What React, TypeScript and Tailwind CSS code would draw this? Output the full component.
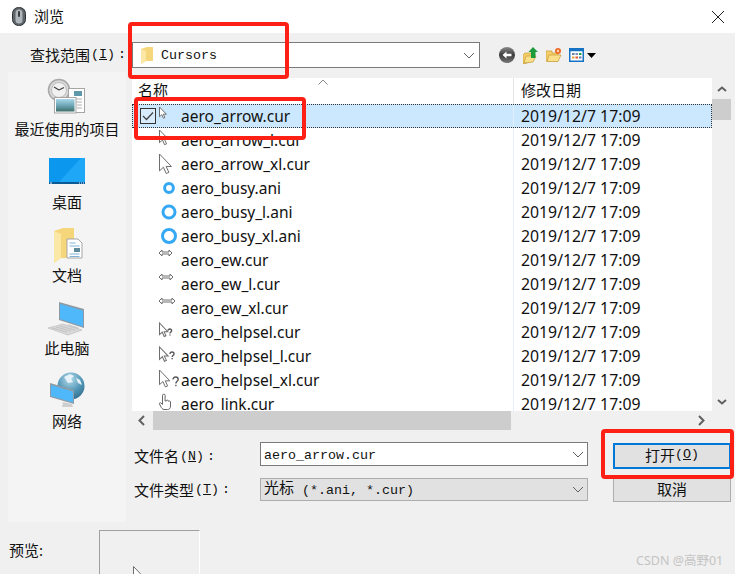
const MONO = "font-['Liberation_Mono','Noto_Sans_CJK_SC',monospace]";
const names = [
  "aero_arrow.cur","aero_arrow_l.cur","aero_arrow_xl.cur","aero_busy.ani","aero_busy_l.ani","aero_busy_xl.ani","aero_ew.cur","aero_ew_l.cur","aero_ew_xl.cur","aero_helpsel.cur","aero_helpsel_l.cur","aero_helpsel_xl.cur","aero_link.cur",
];

function Arrow({ x, y, s }: { x: number; y: number; s: number }) {
  return (
    <path
      transform={`translate(${x} ${y}) scale(${s})`}
      d="M0 0V13L3 10.2L5.2 15L7.2 14.1L5.1 9.6H9.2Z"
      fill="#fff"
      stroke="#6e6e6e"
      strokeWidth={1 / s}
    />
  );
}

function Ring({ r }: { r: number }) {
  return <circle cx="11" cy="12" r={r} fill="#fff" stroke="#35a8f3" strokeWidth="3" />;
}

function Ew({ y, w }: { y: number; w: number }) {
  const e = 1 + w;
  return (
    <path
      d={`M1 ${y}L4 ${y - 3}V${y - 1}H${e - 3}V${y - 3}L${e} ${y}L${e - 3} ${y + 3}V${y + 1}H4V${y + 3}Z`}
      fill="#fff"
      stroke="#6e6e6e"
      strokeWidth="1"
    />
  );
}

function Help({ s, y, qx, qy, q }: { s: number; y: number; qx: number; qy: number; q: number }) {
  return (
    <>
      <Arrow x={1.5} y={y} s={s} />
      <path
        transform={`translate(${qx} ${qy}) scale(${q})`}
        d="M0 2A2 2 0 0 1 4 2C4 3.2 2.2 3.5 2.2 5M2.2 6V7.2"
        fill="none"
        stroke="#5a5a5a"
        strokeWidth={1.4 / q}
      />
    </>
  );
}

function RowIcon({ i }: { i: number }) {
  return (
    <svg width="23" height="24" viewBox="0 0 23 24" className="shrink-0 overflow-visible">
      {i === 0 && <Arrow x={1.5} y={3} s={0.75} />}
      {i === 1 && <Arrow x={1.5} y={2} s={0.98} />}
      {i === 2 && <Arrow x={1.5} y={2} s={1.3} />}
      {i === 3 && <Ring r={4.4} />}
      {i === 4 && <Ring r={6} />}
      {i === 5 && <Ring r={6.5} />}
      {i === 6 && <Ew y={5} w={13} />}
      {i === 7 && <Ew y={5} w={14} />}
      {i === 8 && <Ew y={5} w={16} />}
      {i === 9 && <Help s={0.9} y={3} qx={10} qy={9} q={0.9} />}
      {i === 10 && <Help s={0.95} y={3} qx={12} qy={8} q={1} />}
      {i === 11 && <Help s={1.13} y={2} qx={15} qy={9} q={1.3} />}
      {i === 12 && (
        <path d="M4.5 3.5a1.3 1.3 0 0 1 2.6 0V9h1.2a1 1 0 0 1 2 .3h.5a1 1 0 0 1 1.7 .7V14c0 2-1 3.5-3 3.5H6C4.5 17.5 3.5 16 2.5 14L1.5 12c-.5-1 .8-1.8 1.5-1l1.5 1.5Z" fill="#fff" stroke="#666" strokeWidth="1" />
      )}
    </svg>
  );
}

function Chevron() {
  return (
    <svg width="12" height="7" viewBox="0 0 12 7" className="shrink-0">
      <path d="M1 1L6 6L11 1" fill="none" stroke="#606060" strokeWidth="1" />
    </svg>
  );
}

function Label({ zh, k }: { zh: string; k: string }) {
  return (
    <span className="text-[15px] text-[#111] flex items-center">
      {zh}
      <span className={`${MONO} text-[13.33px] ml-[1px]`}>
        (<u>{k}</u>)<span className="ml-[3px]">:</span>
      </span>
    </span>
  );
}

function Recent() {
  return (
    <svg width="48" height="48" viewBox="0 0 48 48" className="overflow-visible">
      <defs>
        <linearGradient id="sky" x1="0" y1="0" x2="0" y2="1">
          <stop offset="0" stopColor="#a9d8ea" />
          <stop offset="0.5" stopColor="#6fa8b8" />
          <stop offset="1" stopColor="#3e6f6c" />
        </linearGradient>
      </defs>
      <circle cx="16" cy="18" r="10.5" fill="#d8d8d8" stroke="#a8a8a8" strokeWidth="1.5" />
      <circle cx="16" cy="18" r="7.5" fill="#f1f1f1" stroke="#bdbdbd" />
      <path d="M16 18L11 15M16 18L21 15.5" stroke="#444" strokeWidth="1.2" />
      <rect x="25.5" y="16.5" width="16" height="24" fill="#fff" stroke="#a5a5a5" />
      <rect x="31" y="19" width="8" height="5" fill="#5f98a8" />
      <path d="M28 27h11M28 30h11M34 33h5M34 36h5" stroke="#b0b0b0" />
      <rect x="11.5" y="25.5" width="21.5" height="15.5" fill="#fff" stroke="#a5a5a5" />
      <rect x="13" y="27" width="18.5" height="12.5" fill="url(#sky)" />
    </svg>
  );
}

function Desktop() {
  return (
    <svg width="48" height="48" viewBox="0 0 48 48">
      <rect x="6" y="13" width="36" height="26" fill="#0c97ef" />
      <path d="M16 37L38 13H42V37Z" fill="#1ea6f7" />
      <rect x="6" y="37" width="36" height="2" fill="#0b5a94" />
      <path d="M7 38h2M36 38h1M38 38h1M40 38h1" stroke="#e8f6ff" />
    </svg>
  );
}

function Docs() {
  return (
    <svg width="48" height="48" viewBox="0 0 48 48" className="overflow-visible">
      <path d="M11 13L20 10H31V40H18L11 45Z" fill="#f6d67a" />
      <path d="M11 13L18 16V40L11 45Z" fill="#fbe7a6" />
      <path d="M24 21H35L39 25V40H24Z" fill="#fff" stroke="#a5a5a5" />
      <path d="M26.5 25h6M26.5 28h10M26.5 36h10M26.5 38.5h10" stroke="#7fb4d8" />
      <rect x="31" y="30" width="6" height="4" fill="#5f8a9b" />
    </svg>
  );
}

function Computer() {
  return (
    <svg width="48" height="48" viewBox="0 0 48 48" className="overflow-visible">
      <path d="M24 33L35 36L36 39L30 38Z" fill="#cfcfcf" />
      <path d="M16 11L41 18V37L16 29Z" fill="#8f9aa3" />
      <path d="M17 13L40 19.5V35.5L17 28Z" fill="#4fb8fb" />
      <path d="M5 37L20 33L39 39L25 44Z" fill="#d9d9d9" stroke="#b9b9b9" strokeWidth="0.6" />
      <path d="M9 37l15 4M13 36l15 4M17 35l15 4" stroke="#b3b3b3" strokeWidth="0.6" />
    </svg>
  );
}

function Network() {
  return (
    <svg width="48" height="48" viewBox="0 0 48 48" className="overflow-visible">
      <defs>
        <radialGradient id="globe" cx="0.45" cy="0.25" r="0.85">
          <stop offset="0" stopColor="#b5dceb" />
          <stop offset="0.55" stopColor="#5095b5" />
          <stop offset="1" stopColor="#2b6285" />
        </radialGradient>
      </defs>
      <circle cx="28" cy="22" r="13.5" fill="url(#globe)" />
      <path d="M21 13l6-3 4 2-3 3 2 3-5 1-2-3ZM33 14l4 2 2 5-4-2Z" fill="#e6f2f7" />
      <path d="M20 38L29 40L30 43H19Z" fill="#cfcfcf" />
      <path d="M7 19L31 26V40L7 33Z" fill="#8f9aa3" />
      <path d="M8 21L30 27.5V38.5L8 32Z" fill="#4fb8fb" />
    </svg>
  );
}

function Side({ label, children }: { label: string; children: React.ReactNode }) {
  return (
    <div className="h-[73px] flex flex-col items-center">
      <div className="h-[48px] w-[48px] shrink-0">{children}</div>
      <div className="h-[18px] leading-[18px] text-[15px] text-[#111] whitespace-nowrap">{label}</div>
    </div>
  );
}

function Mark({ cls }: { cls: string }) {
  return <div className={`absolute border-[4px] border-[#ff2015] rounded-[4px] pointer-events-none ${cls}`} />;
}

export default function App() {
  return (
    <div className="relative w-[735px] h-[574px] overflow-hidden bg-[#f0f0f0] flex flex-col font-['Noto_Sans','Noto_Sans_CJK_SC',sans-serif] text-[#111]">
      {/* title */}
      <div className="h-[33px] shrink-0 bg-white flex items-center pl-[12px] pr-[10px]">
        <svg width="14" height="19" viewBox="0 0 14 19">
          <rect x="0.5" y="0.5" width="13" height="18" rx="6" fill="#5e6468" stroke="#2f3235" />
          <rect x="3.5" y="2.5" width="7" height="14" rx="3.5" fill="#aeb6bc" />
          <rect x="6" y="4" width="2" height="6" rx="1" fill="#3a3d40" />
        </svg>
        <span className="ml-[8px] text-[15px] leading-none">浏览</span>
        <svg width="14" height="14" viewBox="0 0 14 14" className="ml-auto">
          <path d="M1 1L13 13M13 1L1 13" stroke="#222" strokeWidth="1" />
        </svg>
      </div>

      {/* toolbar */}
      <div className="h-[39px] shrink-0 flex items-start pt-[9px]">
        <div className="w-[132px] h-[26px] pl-[30px] flex items-center shrink-0">
          <Label zh="查找范围" k="I" />
        </div>
        <div className="w-[348px] h-[26px] shrink-0 bg-white border border-[#7a7a7a] flex items-center pl-[8px] pr-[4px]">
          <svg width="13" height="17" viewBox="0 0 13 17">
            <path d="M0 2L6 0H12V14H5L0 17Z" fill="#f6d67a" />
            <path d="M0 2L5 4V14L0 17Z" fill="#fbe7a6" />
          </svg>
          <span className={`${MONO} ml-[7px] pt-[2px] text-[13.33px]`}>Cursors</span>
          <div className="ml-auto"><Chevron /></div>
        </div>
        <div className="ml-[19px] h-[26px] flex items-center">
          <svg width="16" height="16" viewBox="0 0 16 16">
            <defs>
              <linearGradient id="bk" x1="0" y1="0" x2="0" y2="1">
                <stop offset="0" stopColor="#8a8a8a" />
                <stop offset="0.5" stopColor="#3d3d3d" />
                <stop offset="1" stopColor="#777" />
              </linearGradient>
            </defs>
            <circle cx="8" cy="8" r="8" fill="url(#bk)" />
            <path d="M3.5 8L7.5 4.5V6.8H12.5V9.2H7.5V11.5Z" fill="#fff" />
          </svg>
          <svg width="15" height="17" viewBox="0 0 15 17" className="ml-[8px]">
            <path d="M0 8L2 6H9V14L1 17H0Z" fill="#f6cf6a" stroke="#c49a35" strokeWidth="0.7" />
            <path d="M1 16L3 9H13L10 15Z" fill="#fbe08c" stroke="#c49a35" strokeWidth="0.7" />
            <path d="M10 0L15 5H12.5V11H8V5H5.5Z" fill="#1c9a3c" />
          </svg>
          <svg width="16" height="14" viewBox="0 0 16 14" className="ml-[8px]">
            <path d="M0 3H6V5H12V13H0Z" fill="#f6cf6a" stroke="#c49a35" strokeWidth="0.7" />
            <path d="M1 13.5L3 7H15L12 13.5Z" fill="#fbe08c" stroke="#c49a35" strokeWidth="0.7" />
            <circle cx="12" cy="3" r="3" fill="#ee6a2a" />
            <circle cx="12" cy="3" r="1.2" fill="#ffd7a8" />
          </svg>
          <svg width="15" height="14" viewBox="0 0 15 14" className="ml-[7px]">
            <rect x="0.75" y="0.75" width="13.5" height="12.5" fill="#fff" stroke="#1673c4" strokeWidth="1.5" />
            <rect x="0.75" y="0.75" width="13.5" height="2.5" fill="#1673c4" />
            <rect x="3" y="5" width="2.5" height="2" fill="#6a7fa8" />
            <rect x="6.5" y="5" width="2.5" height="2" fill="#7a8fb5" />
            <rect x="10" y="5" width="2.5" height="2" fill="#27a04a" />
            <rect x="3" y="8.5" width="2.5" height="2" fill="#e3a23a" />
            <rect x="6.5" y="8.5" width="2.5" height="2" fill="#e0562a" />
            <rect x="10" y="8.5" width="2.5" height="2" fill="#6a7fa8" />
          </svg>
          <svg width="9" height="5" viewBox="0 0 9 5" className="ml-[3px]">
            <path d="M0 0H9L4.5 5Z" fill="#000" />
          </svg>
        </div>
      </div>

      {/* middle */}
      <div className="h-[450px] shrink-0 flex">
        <div className="ml-[8px] w-[118px] shrink-0 bg-[#f4f4f4]">
          <Side label="最近使用的项目"><Recent /></Side>
          <Side label="桌面"><Desktop /></Side>
          <Side label="文档"><Docs /></Side>
          <Side label="此电脑"><Computer /></Side>
          <Side label="网络"><Network /></Side>
        </div>
        <div className="ml-[4px] w-[601px] shrink-0 pt-[6px] flex flex-col">
          <div className="h-[333px] flex shrink-0">
            <div className="ml-[2px] w-[580px] bg-white overflow-hidden">
              <div className="h-[26px] flex text-[15px] leading-[25px]">
                <div className="relative w-[382px] pl-[6px] border-r border-[#e5e5e5]">
                  名称
                  <svg width="10" height="6" viewBox="0 0 10 6" className="absolute left-[186px] top-[1px]">
                    <path d="M0.5 5.5L5 1L9.5 5.5" fill="none" stroke="#8a8a8a" />
                  </svg>
                </div>
                <div className="pl-[7px]">修改日期</div>
              </div>
              {names.map((n, i) => (
                <div
                  key={n}
                  className={`h-[24px] flex items-center ${i === 0 ? "bg-[#cce8ff] outline-dotted outline-1 -outline-offset-1 outline-[#333]" : ""}`}
                >
                  <div className="w-[382px] h-full flex items-center pl-[8px] border-r border-[#e3efff] shrink-0">
                    <div className="w-[18px] shrink-0">
                      {i === 0 && (
                        <div className="w-[16px] h-[16px] border border-[#333] bg-[#d8ecfb] flex items-center justify-center">
                          <svg width="12" height="10" viewBox="0 0 12 10">
                            <path d="M1 5L4.5 8.5L11 1.5" fill="none" stroke="#444" strokeWidth="1.3" />
                          </svg>
                        </div>
                      )}
                    </div>
                    <RowIcon i={i} />
                    <span className="whitespace-nowrap text-[15.5px] pt-[2px]">{n}</span>
                  </div>
                  <div className="pl-[7px] pt-[2px] whitespace-nowrap text-[15.8px]">2019/12/7 17:09</div>
                </div>
              ))}
            </div>
            <div className="w-[19px] flex flex-col items-stretch shrink-0">
              <div className="h-[21px] flex items-center justify-center">
                <svg width="10" height="6" viewBox="0 0 10 6">
                  <path d="M1 5L5 1.5L9 5" fill="none" stroke="#606060" strokeWidth="2" />
                </svg>
              </div>
              <div className="h-[21px] bg-[#cdcdcd]" />
              <div className="mt-auto h-[19px] flex items-center justify-center">
                <svg width="10" height="6" viewBox="0 0 10 6">
                  <path d="M1 1L5 4.5L9 1" fill="none" stroke="#606060" strokeWidth="2" />
                </svg>
              </div>
            </div>
          </div>
          <div className="h-[19px] flex items-center shrink-0">
            <div className="w-[23px] flex justify-center">
              <svg width="7" height="11" viewBox="0 0 7 11">
                <path d="M6 1L1.5 5.5L6 10" fill="none" stroke="#606060" strokeWidth="2" />
              </svg>
            </div>
            <div className="w-[358px] h-full bg-[#cdcdcd]" />
            <div className="ml-auto w-[60px] flex justify-center">
              <svg width="7" height="11" viewBox="0 0 7 11">
                <path d="M1 1L5.5 5.5L1 10" fill="none" stroke="#606060" strokeWidth="2" />
              </svg>
            </div>
          </div>
          <div className="mt-[12px] flex h-[26px] shrink-0">
            <div className="w-[130px] pl-[4px] h-[29px] flex items-center shrink-0">
              <Label zh="文件名" k="N" />
            </div>
            <div className={`w-[328px] h-[24px] shrink-0 bg-white border border-[#7a7a7a] flex items-center pl-[3px] pr-[3px] ${MONO} text-[13.33px]`}>
              <span className="pt-[3px]">aero_arrow.cur</span>
              <div className="ml-auto"><Chevron /></div>
            </div>
            <div className="ml-[25px] mt-[1px] w-[118px] h-[26px] bg-[#e1e1e1] border-2 border-[#0078d7] flex items-center justify-center text-[15px] pb-[2px]">
              打开
              <span className={`${MONO} text-[13.33px]`}>(<u>O</u>)</span>
            </div>
          </div>
          <div className="mt-[10px] flex shrink-0">
            <div className="w-[130px] pl-[4px] h-[24px] flex items-center shrink-0">
              <Label zh="文件类型" k="T" />
            </div>
            <div className={`w-[328px] h-[23px] shrink-0 bg-[#e1e1e1] border border-[#adadad] flex items-center pl-[3px] pr-[3px] ${MONO} text-[13.33px]`}>
              <span className="text-[15px] pt-[2px]">光标</span>
              <span className="whitespace-pre pt-[2px]"> (*.ani, *.cur)</span>
              <div className="ml-auto"><Chevron /></div>
            </div>
            <div className="ml-[25px] w-[118px] h-[24px] bg-[#e1e1e1] border border-[#adadad] flex items-center justify-center text-[15px] pb-[2px]">
              取消
            </div>
          </div>
        </div>
      </div>

      {/* preview */}
      <div className="flex-1 flex items-start pt-[8px]">
        <div className="w-[99px] pl-[9px] h-[40px] flex items-center text-[15px] shrink-0">预览:</div>
        <div className="w-[101px] h-[60px] border-t border-l border-t-[#a0a0a0] border-l-[#a0a0a0] border-r border-r-white pl-[33px] pt-[35px]">
          <svg width="14" height="20" viewBox="0 0 14 20" className="overflow-visible">
            <Arrow x={0.5} y={0.5} s={1} />
          </svg>
        </div>
      </div>

      {/* annotations */}
      <Mark cls="left-[128px] top-[22px] w-[161px] h-[57px]" />
      <Mark cls="left-[134px] top-[97px] w-[172px] h-[43px]" />
      <Mark cls="left-[601px] top-[429px] w-[133px] h-[50px]" />
      <div className="absolute left-[636px] top-[552px] text-[12.5px] leading-[18px] text-[#c4c4c4] whitespace-nowrap">CSDN @高野01</div>
    </div>
  );
}
